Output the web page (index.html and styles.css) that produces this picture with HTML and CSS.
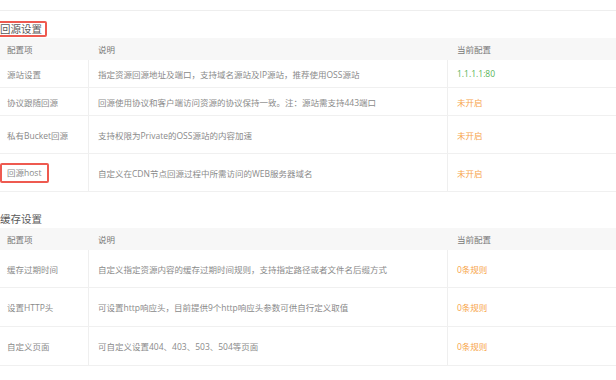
FILE: index.html
```html
<!DOCTYPE html>
<html>
<head>
<meta charset="utf-8">
<link rel="stylesheet" href="styles.css">
</head>
<body>
<div class="topbar"></div>

<div class="section first">
  <div class="title boxed">回源设置</div>
  <div class="table">
    <div class="row head">
      <div class="c1">配置项</div><div class="c2">说明</div><div class="c3">当前配置</div>
    </div>
    <div class="row h28">
      <div class="c1">源站设置</div><div class="c2">指定资源回源地址及端口，支持域名源站及IP源站，推荐使用OSS源站</div><div class="c3 green">1.1.1.1:80</div>
    </div>
    <div class="row h28">
      <div class="c1">协议跟随回源</div><div class="c2">回源使用协议和客户端访问资源的协议保持一致。注：源站需支持443端口</div><div class="c3 orange">未开启</div>
    </div>
    <div class="row h38">
      <div class="c1">私有Bucket回源</div><div class="c2">支持权限为Private的OSS源站的内容加速</div><div class="c3 orange">未开启</div>
    </div>
    <div class="row h38">
      <div class="c1"><span class="mark">回源host</span></div><div class="c2">自定义在CDN节点回源过程中所需访问的WEB服务器域名</div><div class="c3 orange">未开启</div>
    </div>
  </div>
</div>

<div class="section second">
  <div class="title">缓存设置</div>
  <div class="table">
    <div class="row head">
      <div class="c1">配置项</div><div class="c2">说明</div><div class="c3">当前配置</div>
    </div>
    <div class="row h38">
      <div class="c1">缓存过期时间</div><div class="c2">自定义指定资源内容的缓存过期时间规则，支持指定路径或者文件名后缀方式</div><div class="c3 orange">0条规则</div>
    </div>
    <div class="row h39">
      <div class="c1">设置HTTP头</div><div class="c2">可设置http响应头，目前提供9个http响应头参数可供自行定义取值</div><div class="c3 orange">0条规则</div>
    </div>
    <div class="row h39">
      <div class="c1">自定义页面</div><div class="c2">可自定义设置404、403、503、504等页面</div><div class="c3 orange">0条规则</div>
    </div>
  </div>
</div>
</body>
</html>
```

FILE: styles.css
```css
html, body {
  margin: 0;
  padding: 0;
  background: #fff;
}
body {
  font-family: "Open Sans", "Noto Sans CJK SC", sans-serif;
  font-size: 8.5px;
  color: #8a8a8a;
  overflow: hidden;
}
.topbar {
  height: 10px;
  border-bottom: 1px solid #eeeeee;
}
.section.first {
  padding-top: 10px;
}
.section.second {
  padding-top: 19px;
}
.title {
  display: inline-block;
  font-size: 10.5px;
  line-height: 12px;
  color: #5a5a5a;
  border: 2px solid transparent;
  border-radius: 2px;
  margin-left: -2px;
  padding: 0 3px 0 0;
  margin-bottom: 1px;
  vertical-align: top;
}
.title.boxed {
  border-color: #ee5a50;
}
.table {
  width: 100%;
}
.row {
  display: grid;
  grid-template-columns: 88px 359px 1fr;
  border-bottom: 1px solid #f0f0f0;
  box-sizing: border-box;
  align-items: stretch;
}
.row > div {
  display: flex;
  align-items: center;
  white-space: nowrap;
}
.row .c1 { padding-left: 7px; }
.row .c2 { padding-left: 9px; border-left: 1px solid #efefef; }
.row .c3 { padding-left: 9px; border-left: 1px solid #efefef; }
.row.head {
  height: 22px;
  background: #f7f7f7;
  border-bottom: none;
  color: #777;
}
.row.head .c2, .row.head .c3 { border-left-color: transparent; }
.h28 { height: 28px; }
.h38 { height: 38px; }
.h39 { height: 39px; }
.green { color: #58b458; }
.orange { color: #f7a54a; }
.mark {
  display: inline-block;
  margin-left: -7px;
  padding: 0 6px 0 5px;
  line-height: 16px;
  border: 2px solid #ee5a50;
  border-radius: 2px;
}
```
